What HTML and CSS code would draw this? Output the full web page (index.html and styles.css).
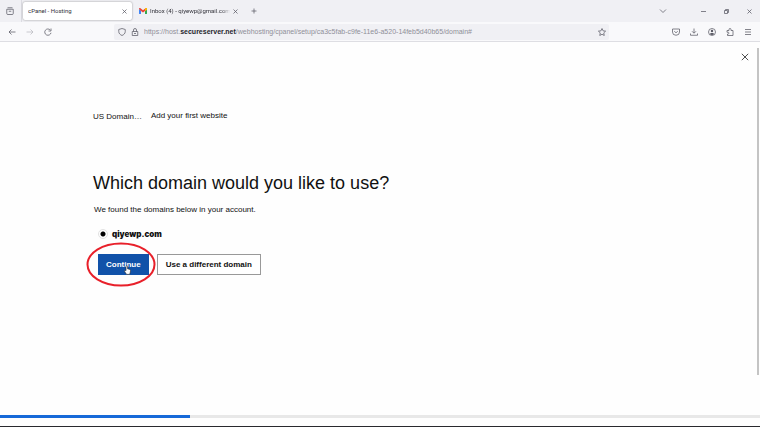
FILE: index.html
```html
<!DOCTYPE html>
<html lang="en">
  <head>
    <meta charset="utf-8">
    <title>cPanel - Hosting</title>
    <link rel="stylesheet" href="styles.css">
  </head>
  <body>

    <!-- tabs -->
    <div class="tabbar">
      <button type="button" class="icon-btn view-btn" aria-label="Firefox View">
        <svg class="icon" viewBox="0 0 16 16"><path d="M3 1.500h10M1.500 4.500h13V13a2 2 0 0 1-2 2h-9a2 2 0 0 1-2-2zM5.500 8.500h5"/></svg>
      </button>
      <div class="tab tab-active">
        <span class="tab-title">cPanel - Hosting</span>
        <button type="button" class="icon-btn" aria-label="Close tab">
          <svg class="icon icon-small" viewBox="0 0 10 10"><path d="M1 1l8 8M9 1l-8 8"/></svg>
        </button>
      </div>
      <div class="tab">
        <svg class="gmail" viewBox="0 0 16 12">
          <path fill="#4285f4" d="M0 2v9a1 1 0 0 0 1 1h3V5z"/>
          <path fill="#34a853" d="M16 2v9a1 1 0 0 1-1 1h-3V5z"/>
          <path fill="#ea4335" d="M0 2a2 2 0 0 1 3-1.600l5 4 5-4A2 2 0 0 1 16 2l-4 4-4 3-4-3z"/>
          <path fill="#fbbc04" d="M12 1.200l1-.8A2 2 0 0 1 16 2v1.500l-4 3z"/>
        </svg>
        <span class="tab-title tab-fade">Inbox (4) - qiyewp@gmail.com</span>
        <button type="button" class="icon-btn" aria-label="Close tab">
          <svg class="icon icon-small" viewBox="0 0 10 10"><path d="M1 1l8 8M9 1l-8 8"/></svg>
        </button>
      </div>
      <button type="button" class="icon-btn new-tab" aria-label="New tab">
        <svg class="icon icon-plus" viewBox="0 0 12 12"><path d="M6 1v10M1 6h10"/></svg>
      </button>
      <div class="window-btns">
        <button type="button" class="icon-btn list-btn" aria-label="List all tabs">
          <svg class="icon" viewBox="0 0 16 16"><path d="M2 5l6 6 6-6"/></svg>
        </button>
        <button type="button" class="icon-btn" aria-label="Minimize">
          <svg class="icon icon-small" viewBox="0 0 10 10"><path d="M0 5h10"/></svg>
        </button>
        <button type="button" class="icon-btn" aria-label="Restore">
          <svg class="icon icon-small" viewBox="0 0 10 10"><path d="M1 3h6v6H1zM3 3V1h6v6H7"/></svg>
        </button>
        <button type="button" class="icon-btn" aria-label="Close window">
          <svg class="icon icon-small" viewBox="0 0 10 10"><path d="M1 1l8 8M9 1l-8 8"/></svg>
        </button>
      </div>
    </div>

    <!-- address bar -->
    <div class="toolbar">
      <div class="nav-btns">
        <button type="button" class="icon-btn" aria-label="Back">
          <svg class="icon" viewBox="0 0 16 16"><path d="M15 8H2M7 3L2 8l5 5"/></svg>
        </button>
        <button type="button" class="icon-btn" aria-label="Forward" disabled>
          <svg class="icon" viewBox="0 0 16 16"><path d="M1 8h13M9 3l5 5-5 5"/></svg>
        </button>
        <button type="button" class="icon-btn" aria-label="Reload">
          <svg class="icon" viewBox="0 0 16 16"><path d="M14 9.500A6.300 6.300 0 1 1 12.500 4M14 1v5H9"/></svg>
        </button>
      </div>
      <div class="urlbar">
        <svg class="icon" viewBox="0 0 16 16"><path d="M8 1l6.500 2v4c0 4-3 6.500-6.500 8-3.500-1.500-6.500-4-6.500-8V3z"/></svg>
        <svg class="icon" viewBox="0 0 16 16"><path d="M2.500 7h11v8h-11zM5 7V4a3 3 0 0 1 6 0v3M6 11h4"/></svg>
        <span class="url">https://host.<strong>secureserver.net</strong>/webhosting/cpanel/setup/ca3c5fab-c9fe-11e6-a520-14feb5d40b65/domain#</span>
        <button type="button" class="icon-btn" aria-label="Bookmark this page">
          <svg class="icon" viewBox="0 0 16 16"><path d="M8 1l2.200 4.700 5 .6-3.700 3.500 1 5.200L8 12.500 3.500 15l1-5.200L.8 6.300l5-.6z"/></svg>
        </button>
      </div>
      <div class="tool-btns">
        <button type="button" class="icon-btn" aria-label="Save to Pocket">
          <svg class="icon" viewBox="0 0 16 16"><path d="M1 2h14v6a7 6.500 0 0 1-14 0zM4.500 6.500L8 9.500l3.500-3"/></svg>
        </button>
        <button type="button" class="icon-btn" aria-label="Downloads">
          <svg class="icon" viewBox="0 0 16 16"><path d="M8 1v9M4 6.500l4 4 4-4M1 11v3.500h14V11"/></svg>
        </button>
        <button type="button" class="icon-btn" aria-label="Account">
          <svg class="icon" viewBox="0 0 16 16"><circle cx="8" cy="8" r="7"/><path class="solid" d="M8 3.500a2.500 2.500 0 0 1 0 5 2.500 2.500 0 0 1 0-5M3.500 12c.5-3 8.500-3 9 0-2 2.500-7 2.500-9 0"/></svg>
        </button>
        <button type="button" class="icon-btn" aria-label="Extensions">
          <svg class="icon" viewBox="0 0 16 16"><path d="M2 5h4V3a2 2 0 0 1 4 0v2h4v10H3v-3h1.500a1.800 1.800 0 0 0 0-3.500H2z"/></svg>
        </button>
        <button type="button" class="icon-btn" aria-label="Open menu">
          <svg class="icon" viewBox="0 0 16 16"><path d="M2 3h12M2 8h12M2 13h12"/></svg>
        </button>
      </div>
    </div>

    <!-- setup page -->
    <main class="page">
      <button type="button" class="icon-btn page-close" aria-label="Close">
        <svg class="icon" viewBox="0 0 10 10"><path d="M1 1l8 8M9 1l-8 8"/></svg>
      </button>
      <div class="scrollbar"></div>

      <div class="content">
        <div class="crumbs">
          <span class="product">US Domain…</span>
          <span>Add your first website</span>
        </div>

        <h1>Which domain would you like to use?</h1>

        <form action="#" class="domain-form">
          <p>We found the domains below in your account.</p>
          <div class="domain">
            <input type="radio" id="domain1" name="domain" checked>
            <label for="domain1">qiyewp.com</label>
          </div>
          <div class="btn-wrap">
            <div class="marked">
              <button type="submit" class="btn btn-primary">Continue</button>
              <svg class="ring" viewBox="0 0 70 45"><ellipse cx="35" cy="22.500" rx="33.500" ry="21"/></svg>
              <svg class="pointer" viewBox="0 0 12 16"><path d="M3.500 9V2a1.300 1.300 0 0 1 2.600 0v4l4 1c1 .3 1.400 1 1.200 2l-.8 4-1 2.500H4.500L1 10.500c-.8-1.200.5-2.300 1.500-1.500z"/></svg>
            </div>
            <button type="button" class="btn">Use a different domain</button>
          </div>
        </form>
      </div>
    </main>

    <footer class="footer">
      <div class="progress"><div class="progress-bar" style="width:25%"></div></div>
    </footer>

  </body>
</html>
```
FILE: styles.css
```css
* {
	margin:0;
	padding:0;
	box-sizing:border-box;
}

body {
	display:flex;
	flex-direction:column;
	min-height:100vh;
	background:#fefefe;
	color:#111;
	font-family:"Liberation Sans",Arial,sans-serif;
	font-size:8px;
	line-height:10px;
}

/* icons */
.icon {display:block;width:8px;height:8px;fill:none;stroke:#5b5b66;stroke-width:1.5;}
.icon-small {width:5px;height:5px;}
.icon-plus {width:6px;height:6px;}
.icon .solid {fill:#5b5b66;stroke:none;}
.icon-btn {border:0;background:none;color:inherit;}
.icon-btn:disabled {opacity:.4;}

/* tabs */
.tabbar {
	display:flex;
	align-items:center;
	height:22px;
	background:#f0f0f4;
	color:#33333b;
	font-family:Roboto,"Noto Sans",sans-serif;
	font-size:6px;
}
.view-btn {display:flex;align-items:center;height:22px;padding:0 7px 0 6px;border-right:1px solid #dcdce2;}
.tab {display:flex;align-items:center;width:109px;height:18px;margin-left:1px;padding:0 5px;}
.tab-active {border-radius:2px;background:#fff;box-shadow:0 0 2px #888;}
.tab-active + .tab {margin-left:2px;}
.tab-title {flex:1;overflow:hidden;white-space:nowrap;}
.tab-fade {-webkit-mask-image:linear-gradient(to right,#000 90%,transparent);mask-image:linear-gradient(to right,#000 90%,transparent);}
.tab .icon-btn {padding-left:3px;}
.gmail {width:8px;height:6px;margin-right:3px;}
.new-tab {padding-left:8px;}
.window-btns {display:flex;align-items:center;gap:18px;margin-left:auto;padding-right:8px;}
.list-btn {margin-right:16px;}

/* address bar */
.toolbar {
	display:flex;
	align-items:center;
	height:20px;
	border-bottom:1px solid #dedee3;
	background:#f9f9fb;
}
.nav-btns {display:flex;gap:10px;padding:0 62px 0 8px;}
.urlbar {
	display:flex;
	flex:1;
	align-items:center;
	gap:5px;
	height:16px;
	padding:0 3px 0 4px;
	border-radius:2px;
	background:#f0f0f4;
}
.url {flex:1;overflow:hidden;color:#8f8f98;font-size:7px;white-space:nowrap;}
.url strong {color:#25252d;font-weight:600;}
.tool-btns {display:flex;gap:10px;padding:0 8px 0 63px;}

/* page */
.page {position:relative;flex:1;}
.page-close {position:absolute;top:11px;right:11px;}
.page-close .icon {stroke:#222;stroke-width:1;}
.scrollbar {position:absolute;top:6px;right:1px;bottom:40px;width:2px;background:#c4c4c4;}
.content {padding:69px 93px 0;}
.crumbs {display:flex;gap:9px;}
.product {padding-top:1px;}
h1 {margin-top:49px;font-size:18px;font-weight:400;line-height:24px;}
.domain-form {padding:10px 0 0 1px;}

.domain {display:flex;align-items:center;gap:4px;padding:14px 0 0 4px;}
.domain input {
	width:10px;
	height:10px;
	border:1px solid #e2e2e2;
	border-radius:50%;
	background:radial-gradient(circle,#000 2px,#fff 3px);
	appearance:none;
}
.domain label {font-family:Inter,sans-serif;font-weight:900;}

/* button */
.btn-wrap {display:flex;gap:8px;padding:15px 0 0 4px;}
.btn {
	height:21px;
	padding:0 8px;
	border:1px solid #999;
	background:#fff;
	color:#111;
	font-family:inherit;
	font-size:8px;
	font-weight:bold;
}
.btn-primary {padding:0 7px;border-color:#1152a9;background:#1152a9;color:#fff;}
.marked {position:relative;}
.ring {position:absolute;top:-12px;left:-12px;width:70px;height:45px;fill:none;stroke:#e8202a;stroke-width:2;}
.pointer {position:absolute;top:11px;left:26px;width:7px;height:10px;fill:#fff;stroke:#222;stroke-width:1;}

/* progress */
.footer {padding-bottom:8px;border-bottom:1px solid #29292e;}
.progress {height:3px;background:#e8e8e8;}
.progress-bar {height:3px;background:#1669d8;}
```
